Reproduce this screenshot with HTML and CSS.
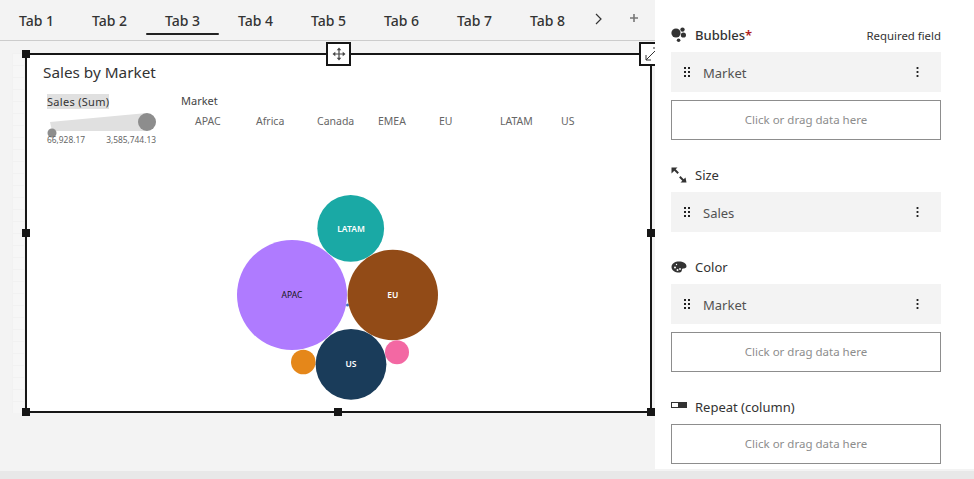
FILE: index.html
```html
<!DOCTYPE HTML>
<html>
<head>
<meta http-equiv="Content-Type" content="text/html; charset=utf-8">
<title>Sales by Market</title>
<link rel="stylesheet" href="styles.css">
</head>
<body>
	<div class="app">
		<div class="work">
			<div class="tabs">
				<span class="tab">Tab 1</span>
				<span class="tab">Tab 2</span>
				<span class="tab active">Tab 3</span>
				<span class="tab">Tab 4</span>
				<span class="tab">Tab 5</span>
				<span class="tab">Tab 6</span>
				<span class="tab">Tab 7</span>
				<span class="tab">Tab 8</span>
				<svg class="tab-next" width="16" height="16" viewBox="0 0 16 16"><path d="M6 3l5 5-5 5" fill="none" stroke="#333" stroke-width="1.2"/></svg>
				<svg class="tab-add" width="12" height="12" viewBox="0 0 12 12"><path d="M6 2v8M2 6h8" fill="none" stroke="#777" stroke-width="1.6"/></svg>
			</div>
			<div class="grid">
				<div class="frame">
					<h2 class="title">Sales by Market</h2>
					<div class="legends">
						<div class="size-legend">
							<span class="legend-name">Sales (Sum)</span>
							<svg class="wedge" width="110" height="28" viewBox="0 0 110 28">
								<path d="M3 10L100 1V19H5z" fill="#e0e0e0"/>
								<circle cx="5" cy="21" r="4.5" fill="#8d8d8d"/>
								<circle cx="100" cy="10" r="9" fill="#8d8d8d"/>
							</svg>
							<div class="size-values"><span>66,928.17</span><span>3,585,744.13</span></div>
						</div>
						<div class="color-legend">
							<span class="legend-title">Market</span>
							<div class="legend-items">
								<span>APAC</span>
								<span>Africa</span>
								<span>Canada</span>
								<span>EMEA</span>
								<span>EU</span>
								<span>LATAM</span>
								<span>US</span>
							</div>
						</div>
					</div>
					<svg class="bubbles" width="623" height="356" viewBox="27 55 623 356">
						<circle cx="347.5" cy="305" r="1.5" fill="#3d6fc4"/>
						<circle cx="350.7" cy="228.4" r="33.4" fill="#1aa9a5"/>
						<circle cx="292" cy="295" r="55" fill="#af7bff"/>
						<circle cx="392.8" cy="295" r="45.2" fill="#924b17"/>
						<circle cx="397" cy="352.3" r="12" fill="#f368a3"/>
						<circle cx="303.3" cy="362" r="12.3" fill="#e5871a"/>
						<circle cx="351" cy="364.3" r="35.4" fill="#1a3c5a"/>
						<text x="351" y="232" class="b-label light">LATAM</text>
						<text x="292" y="297.5" class="b-label">APAC</text>
						<text x="392.8" y="297.5" class="b-label light">EU</text>
						<text x="351" y="366.5" class="b-label light">US</text>
					</svg>
					<i class="handle h-tl"></i>
					<i class="handle h-l"></i>
					<i class="handle h-r"></i>
					<i class="handle h-bl"></i>
					<i class="handle h-b"></i>
					<i class="handle h-br"></i>
					<span class="tool tool-move">
						<svg width="14" height="14" viewBox="0 0 14 14"><path d="M7 .5l2.300 2.800H4.700zM7 13.500l2.300-2.800H4.700zM.5 7l2.800-2.300v4.600zM13.500 7l-2.800-2.300v4.600z" fill="#444"/><path d="M7 3v8M3 7h8" stroke="#444" stroke-width="1.200"/></svg>
					</span>
					<span class="tool tool-resize">
						<svg width="14" height="14" viewBox="0 0 14 14"><path d="M1 13L13 1M1 8v5h5M8 1h5v5" fill="none" stroke="#333" stroke-width="1"/></svg>
					</span>
				</div>
			</div>
		</div>
		<div class="panel">
			<div class="slot-group">
				<div class="slot-head">
					<svg class="slot-icon" width="16" height="16" viewBox="0 0 16 16"><circle cx="5" cy="6" r="4.6" fill="#333"/><circle cx="11.5" cy="2.6" r="2.2" fill="#333"/><circle cx="12.4" cy="8" r="2.6" fill="#333"/><circle cx="7.6" cy="13.2" r="1.8" fill="#333"/></svg>
					<span class="slot-name strong">Bubbles<b class="req">*</b></span>
					<span class="slot-note">Required field</span>
				</div>
				<div class="slot-item"><span class="drag"></span><span class="item-name">Market</span><span class="kebab"></span></div>
				<div class="slot-empty">Click or drag data here</div>
			</div>
			<div class="slot-group">
				<div class="slot-head">
					<svg class="slot-icon" width="16" height="16" viewBox="0 0 16 16"><path d="M.5.500h6L4.700 2.300l3.200 3.200-1.400 1.400-3.200-3.200L.5 6.500zM15.500 15.500h-6l1.800-1.800-3.200-3.200 1.400-1.400 3.200 3.200 1.800-1.800z" fill="#333"/></svg>
					<span class="slot-name">Size</span>
				</div>
				<div class="slot-item"><span class="drag"></span><span class="item-name">Sales</span><span class="kebab"></span></div>
			</div>
			<div class="slot-group">
				<div class="slot-head">
					<svg class="slot-icon" width="16" height="16" viewBox="0 0 16 16"><path d="M8 2.500c4 0 7.500 2 7.500 4.800 0 2-2 2.200-3.500 2.300-1 .1-1 1-1.200 1.800C10.500 12.800 9.500 13.500 8 13.500 4 13.500.5 11.500.5 8S4 2.500 8 2.500z" fill="#333"/><circle cx="4" cy="8.500" r="1" fill="#fff"/><circle cx="6.500" cy="11" r="1" fill="#fff"/><circle cx="9" cy="10" r=".9" fill="#fff"/><circle cx="5.500" cy="5.500" r=".7" fill="#fff"/></svg>
					<span class="slot-name">Color</span>
				</div>
				<div class="slot-item"><span class="drag"></span><span class="item-name">Market</span><span class="kebab"></span></div>
				<div class="slot-empty">Click or drag data here</div>
			</div>
			<div class="slot-group">
				<div class="slot-head">
					<svg class="slot-icon" width="16" height="16" viewBox="0 0 16 16"><rect x=".5" y="3.500" width="7" height="5" fill="#fff" stroke="#333"/><rect x="8" y="3" width="8" height="6" fill="#333"/></svg>
					<span class="slot-name">Repeat (column)</span>
				</div>
				<div class="slot-empty">Click or drag data here</div>
			</div>
		</div>
	</div>
	<div class="scrollbar"></div>
</body>
</html>
```

FILE: styles.css
```css
html, body {
	margin: 0;
	height: 100%;
	overflow: hidden;
}

body {
	font-family: "Noto Sans", "Open Sans", sans-serif;
	color: #333;
	background: #f3f3f3;
}

.app {
	display: flex;
	height: 471px;
}

.scrollbar {
	height: 8px;
	background: #e8e8e8;
}

/* left side */
.work {
	width: 655px;
	overflow: hidden;
	flex-shrink: 0;
}

.tabs {
	display: flex;
	align-items: center;
	height: 40px;
	border-bottom: 1px solid #ccc;
}

.tab {
	position: relative;
	width: 73px;
	height: 40px;
	line-height: 41px;
	text-align: center;
	font-size: 14px;
	font-weight: 500;
	color: #333;
}

.tab.active::after {
	content: "";
	position: absolute;
	left: 0;
	right: 0;
	bottom: 5px;
	height: 2px;
	border-radius: 1px;
	background: #222;
}

.tab-next {
	margin: -2px 0 0 6px;
}

.tab-add {
	margin: -4px 0 0 22px;
}

.grid {
	width: 640px;
	height: 360px;
	margin: 12px 0 0 12px;
	padding-left: 13px;
	box-sizing: border-box;
	background-color: #f6f6f6;
	background-image: linear-gradient(#f1f1f1 1px, transparent 1px), linear-gradient(90deg, #f1f1f1 1px, transparent 1px);
	background-size: 12px 12px;
}

.frame {
	position: relative;
	box-sizing: border-box;
	width: 627px;
	height: 360px;
	border: 2px solid #161616;
	background: #fff;
	padding: 6px 0 0 16px;
}

.title {
	margin: 0;
	font-size: 15.3px;
	line-height: 22px;
	font-weight: 400;
	color: #333;
}

.legends {
	display: flex;
	margin-top: 11px;
	padding-left: 4px;
}

.size-legend {
	width: 134px;
}

.legend-name {
	display: block;
	width: fit-content;
	height: 15px;
	line-height: 15px;
	font-size: 11px;
	letter-spacing: .3px;
	background: #e0e0e0;
}

.wedge {
	display: block;
	margin-top: 3px;
}

.size-values {
	display: flex;
	justify-content: space-between;
	width: 109px;
	margin-top: -5px;
	font-size: 8.4px;
	line-height: 10px;
	color: #666;
}

.legend-title {
	display: block;
	line-height: 13px;
	font-size: 11px;
	color: #444;
}

.legend-items {
	display: grid;
	grid-template-columns: repeat(7, 61px);
	margin: 7px 0 0 14px;
	font-size: 10.5px;
	line-height: 15px;
	color: #666;
}

.bubbles {
	position: absolute;
	left: 0;
	top: 0;
}

.b-label {
	font-size: 8.5px;
	text-anchor: middle;
	fill: #161616;
}

.b-label.light {
	fill: #fff;
	font-weight: 600;
}

.handle {
	position: absolute;
	width: 8px;
	height: 8px;
	background: #161616;
}

.h-tl { left: -5px; top: -5px; }
.h-l  { left: -5px; top: 174px; }
.h-r  { right: -5px; top: 174px; }
.h-bl { left: -5px; bottom: -5px; }
.h-b  { left: 307px; bottom: -5px; }
.h-br { right: -5px; bottom: -5px; }

.tool {
	position: absolute;
	top: -13px;
	box-sizing: border-box;
	display: flex;
	align-items: center;
	justify-content: center;
	width: 25px;
	height: 24px;
	border: 2px solid #161616;
	background: #fff;
}

.tool-move { left: 299px; }
.tool-resize { left: 612px; }

/* right side */
.panel {
	flex: 1;
	height: 469px;
	box-sizing: border-box;
	background: #fff;
	padding: 23px 33px 0 16px;
}

.slot-group {
	margin-bottom: 23px;
}

.slot-head {
	display: flex;
	align-items: center;
	height: 24px;
	margin-bottom: 5px;
}

.slot-icon {
	flex-shrink: 0;
	margin-right: 8px;
}

.slot-name {
	font-size: 13px;
	color: #333;
}

.slot-name.strong {
	font-weight: 500;
}

.req {
	color: #b01c1c;
	font-weight: 600;
}

.slot-note {
	margin-left: auto;
	font-size: 11.4px;
	color: #333;
}

.slot-item {
	display: flex;
	align-items: center;
	height: 40px;
	padding: 0 22px 0 12px;
	background: #f3f3f3;
	font-size: 13px;
	color: #525252;
}

.item-name {
	flex: 1;
	margin: 2px 0 0 12px;
}

/* six dots, two columns */
.drag {
	width: 8px;
	height: 12px;
	background-image: radial-gradient(circle, #222 1px, transparent 1.2px);
	background-size: 4px 4px;
}

.kebab {
	width: 3px;
	height: 12px;
	background-image: radial-gradient(circle, #222 1px, transparent 1.2px);
	background-size: 3px 4px;
}

.slot-empty {
	box-sizing: border-box;
	height: 40px;
	margin-top: 8px;
	border: 1px solid #8d8d8d;
	line-height: 38px;
	text-align: center;
	font-size: 11.5px;
	color: #8d8d8d;
}

.slot-head + .slot-empty {
	margin-top: 0;
}
```
